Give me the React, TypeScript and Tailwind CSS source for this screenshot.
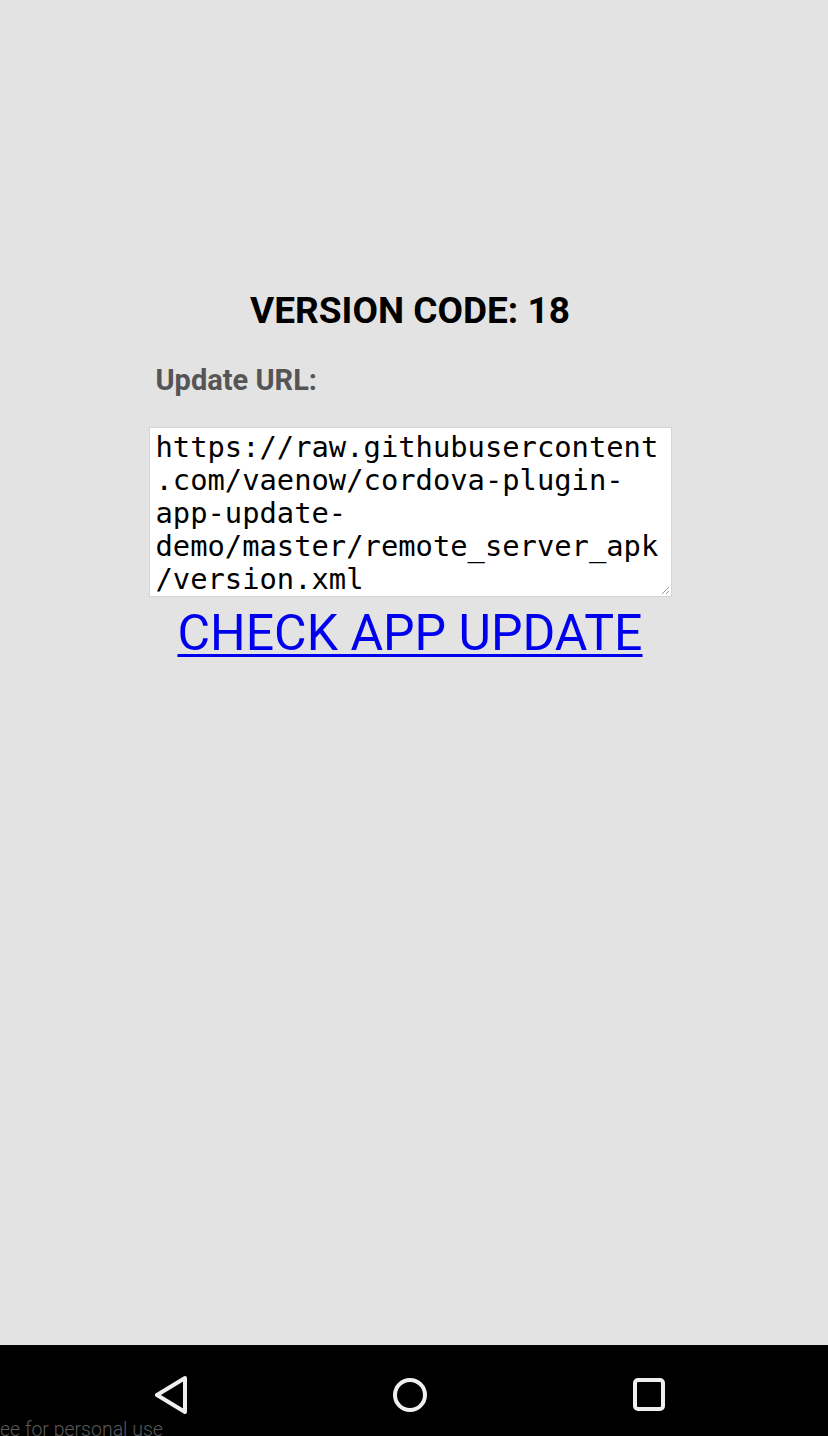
import React from 'react';

const urlLines = [
  'https://raw.githubusercontent',
  '.com/vaenow/cordova-plugin-',
  'app-update-',
  'demo/master/remote_server_apk',
  '/version.xml',
];

const App: React.FC = () => {
  return (
    <div className="flex h-[1436px] w-[828px] flex-col overflow-hidden bg-[#e3e3e3] font-['Roboto',sans-serif]">
      <main className="flex flex-1 flex-col items-center pr-[8px] pt-[289px]">
        <h1 className="text-[37px] font-bold leading-[44px] text-black">VERSION CODE: 18</h1>
        <div className="mt-[30px] w-[523px] pl-[7px] text-[29px] font-bold leading-[34px] text-[#555555]">Update URL:</div>
        <div className="relative mt-[30px] h-[170px] w-[523px] border border-[#d6d6d6] bg-white pl-[6px] pr-[7px] pt-[3px] font-['DejaVu_Sans_Mono',monospace] text-[28.8px] leading-[33px] text-black">
          {urlLines.map((line) => (
            <div key={line} className="whitespace-pre">{line}</div>
          ))}
          <svg className="absolute bottom-[1px] right-[1px]" width="10" height="10" viewBox="0 0 10 10">
            <path d="M9 2 L2 9 M9 6 L6 9" stroke="#9a9a9a" strokeWidth="1" />
          </svg>
        </div>
        <a href="#" className="mt-[7px] text-[50px] leading-[58px] text-[#0000ee] underline decoration-[3px] underline-offset-[4px]">
          CHECK APP UPDATE
        </a>
      </main>
      <nav className="relative flex h-[91px] shrink-0 items-center gap-[206px] bg-black pl-[155px] pt-[8px]">
        <svg width="32" height="38" viewBox="0 0 32 38">
          <path d="M30 2 L2 19 L30 36 Z" fill="none" stroke="#efefef" strokeWidth="4" strokeLinejoin="round" />
        </svg>
        <svg width="34" height="34" viewBox="0 0 34 34">
          <circle cx="17" cy="17" r="15" fill="none" stroke="#efefef" strokeWidth="4" />
        </svg>
        <svg width="32" height="33" viewBox="0 0 32 33">
          <rect x="2" y="2" width="28" height="29" rx="3" fill="none" stroke="#efefef" strokeWidth="4" />
        </svg>
        <span className="absolute bottom-[-5px] left-0 text-[19.5px] font-light leading-[22px] text-[#5a5a5a]">
          ee for personal use
        </span>
      </nav>
    </div>
  );
};

export default App;
